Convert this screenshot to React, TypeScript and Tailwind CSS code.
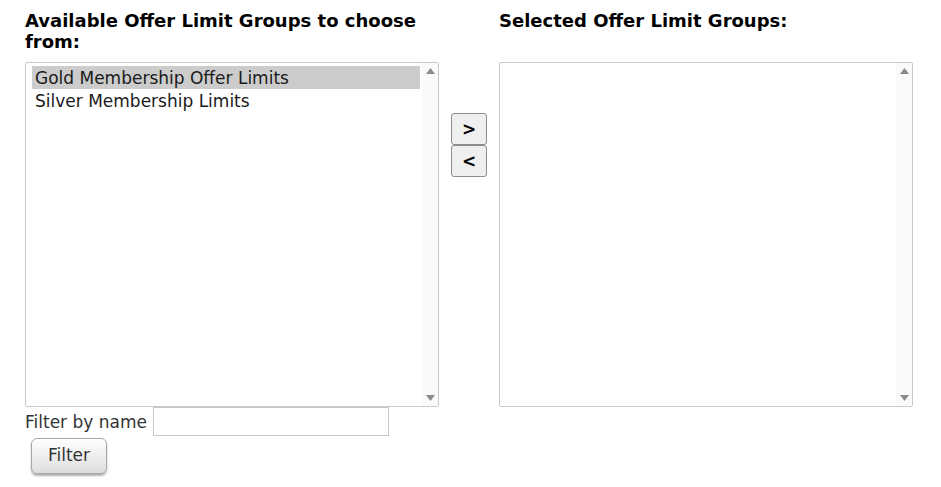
import { useState } from "react"

const font = { fontFamily: '"DejaVu Sans", Verdana, sans-serif' }

// Fake scrollbar track on the right edge of a listbox
function ScrollTrack() {
	return (
		<div className="flex w-[16px] shrink-0 flex-col items-center justify-between bg-[#fafafa] py-[5px]">
			<svg width="9" height="6" viewBox="0 0 9 6">
				<path d="M4.5 0 L9 6 L0 6 Z" fill="#8a8a8a" />
			</svg>
			<svg width="9" height="6" viewBox="0 0 9 6">
				<path d="M0 0 L9 0 L4.5 6 Z" fill="#8a8a8a" />
			</svg>
		</div>
	)
}

function ListBox({
	items,
	selected,
	onSelect,
}: {
	items: string[]
	selected: number | null
	onSelect: (i: number) => void
}) {
	return (
		<div className="flex h-[345px] w-[414px] rounded-[2px] border border-[#c8c8c8] bg-white">
			<div className="flex-1 py-[3px] pl-[6px] pr-[2px]">
				{items.map((item, i) => (
					<div
						key={item}
						onClick={() => onSelect(i)}
						className={`h-[23px] cursor-default whitespace-nowrap px-[3px] pt-[1px] text-[17px] leading-[22px] text-[#1a1a1a] ${
							selected === i ? "bg-[#cccccc]" : ""
						}`}
					>
						{item}
					</div>
				))}
			</div>
			<ScrollTrack />
		</div>
	)
}

export default function App() {
	const [selected, setSelected] = useState<number | null>(0)
	const available = ["Gold Membership Offer Limits", "Silver Membership Limits"]

	return (
		<div className="min-h-[487px] bg-white pl-[25px] pt-[10px]" style={font}>
			<div className="flex">
				{/* Available list */}
				<div className="w-[414px]">
					<h2 className="h-[52px] text-[18px] font-bold leading-[21px] text-black">
						Available Offer Limit Groups to choose from:
					</h2>
					<ListBox items={available} selected={selected} onSelect={setSelected} />
					<div className="flex items-center">
						<span className="mr-[6px] whitespace-nowrap pt-[3px] text-[17px] text-[#333]">Filter by name</span>
						<input className="h-[29px] w-[236px] border border-[#c8c8c8] bg-white px-1 text-[14px] outline-none" />
					</div>
					<button className="ml-[6px] mt-[2px] h-[36px] w-[76px] rounded-[6px] border border-[#a8a8a8] bg-gradient-to-b from-white to-[#dedede] text-[17px] text-[#333] shadow-[0_2px_2px_rgba(0,0,0,0.3)]">
						Filter
					</button>
				</div>

				{/* Move buttons */}
				<div className="flex w-[60px] flex-col items-center pt-[103px]">
					<button className="h-[32px] w-[36px] rounded-[3px] border border-[#8c8c8c] bg-[#efefef] text-[17px] font-bold leading-none text-black">
						&gt;
					</button>
					<button className="h-[32px] w-[36px] rounded-[3px] border border-[#8c8c8c] bg-[#efefef] text-[17px] font-bold leading-none text-black">
						&lt;
					</button>
				</div>

				{/* Selected list */}
				<div className="w-[414px]">
					<h2 className="h-[52px] text-[18px] font-bold leading-[21px] text-black">
						Selected Offer Limit Groups:
					</h2>
					<ListBox items={[]} selected={null} onSelect={() => {}} />
				</div>
			</div>
		</div>
	)
}
